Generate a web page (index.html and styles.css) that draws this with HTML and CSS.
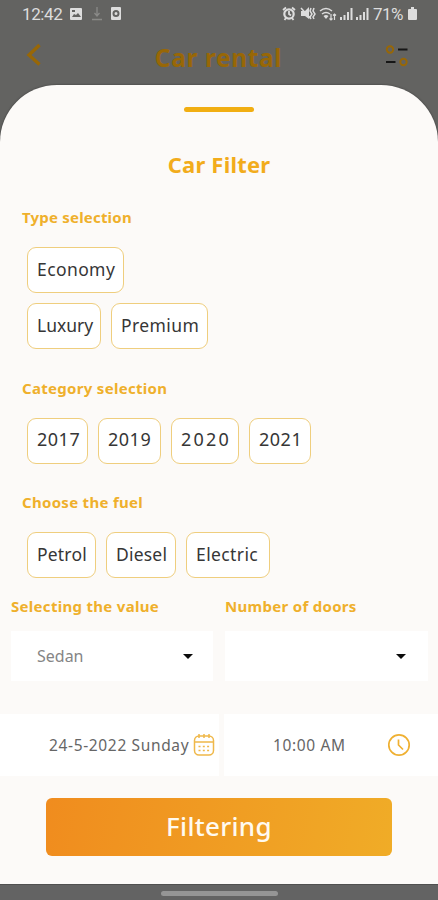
FILE: index.html
```html
<!DOCTYPE html>
<html lang="en">
<head>
<meta charset="utf-8">
<title>Car Filter</title>
<link rel="stylesheet" href="styles.css">
</head>
<body>
<div class="status">
  <span class="time">12:42</span>
  <svg class="left-icons" width="54" height="16" viewBox="0 0 54 16">
    <path fill="#ddd" fill-rule="evenodd" d="M2 2h10q1 0 1 1v10q0 1-1 1H2q-1 0-1-1V3q0-1 1-1zM3 11h9l-3-4-2 2-2-1zM3 4v2h3V4z"/>
    <path stroke="#8a8a88" stroke-width="1.300" fill="none" d="M28 1v9M25.500 7l2.500 3 2.500-3M23 13.500h10"/>
    <path fill="#ddd" fill-rule="evenodd" d="M43 1h8q1 0 1 1v11q0 1-1 1h-8q-1 0-1-1V2q0-1 1-1zM47 4a3.500 3.500 0 1 0 0 7 3.500 3.500 0 1 0 0-7zM47 6a1.500 1.500 0 1 1 0 3 1.500 1.500 0 1 1 0-3z"/>
  </svg>
  <svg class="right-icons" width="90" height="16" viewBox="0 0 90 16" fill="none" stroke="#ddd">
    <circle cx="7" cy="8" r="4.700" stroke-width="2.200"/>
    <path stroke-width="1.800" d="M1 4l3-2.500M13 4l-3-2.500M7 5v3l2 1.500M2.500 14l1.500-2M11.500 14L10 12"/>
    <path fill="#ddd" stroke="none" d="M19 5h4l4-4v12l-4-3h-4z"/>
    <path stroke-width="1.500" d="M19 2l10 11M29 2l-1 3 2 3-2 3 1 2M32 2l-1 3 2 3-2 3 1 2"/>
    <path stroke-width="1.500" d="M38 5q6-5 12 0M40 8q4-3 8 0"/>
    <path fill="#ddd" stroke="none" d="M41.500 10q2.500-2 5 0L44 13z"/>
    <path stroke-width="1.200" d="M49 8v6M47.500 12.500L49 14l1.500-1.500M52.500 14V8M51 9.500L52.500 8 54 9.500"/>
    <path stroke-width="2" d="M59 14v-3M62.500 14V9M66 14V6M69.500 14V2M75 14v-3M78.500 14V9M82 14V6M85.500 14V2"/>
  </svg>
  <span class="percent">71%</span>
  <svg class="battery" width="9" height="14" viewBox="0 0 9 14"><path fill="#ddd" d="M3 0h3v2h2q1 0 1 1v9q0 1-1 1H1q-1 0-1-1V3q0-1 1-1h2z"/></svg>
</div>
<div class="appbar">
  <svg class="back" width="16" height="24" viewBox="0 0 16 24"><path d="M14.500 2L4 12l10.500 9.500" fill="none" stroke="#986706" stroke-width="3.400"/></svg>
  <h1>Car rental</h1>
  <svg class="tune" width="24" height="24" viewBox="0 0 24 24" fill="none" stroke-width="1.900"><circle cx="5" cy="5.500" r="3.200" stroke="#986706"/><circle cx="18.500" cy="18" r="3.200" stroke="#986706"/><path stroke="#161616" stroke-width="2" d="M13 5.500h9.500M1 18h9.500"/></svg>
</div>
<main class="sheet">
  <div class="handle"></div>
  <h2>Car Filter</h2>
  <section class="group type">
    <h3>Type selection</h3>
    <div class="chips">
      <span class="chip economy">Economy</span>
    </div>
    <div class="chips more">
      <span class="chip luxury">Luxury</span>
      <span class="chip premium">Premium</span>
    </div>
  </section>
  <section class="group category">
    <h3>Category selection</h3>
    <div class="chips years">
      <span class="chip y17">2017</span><span class="chip y19">2019</span><span class="chip y20">2020</span><span class="chip y21">2021</span>
    </div>
  </section>
  <section class="group fuel">
    <h3>Choose the fuel</h3>
    <div class="chips">
      <span class="chip petrol">Petrol</span><span class="chip diesel">Diesel</span><span class="chip electric">Electric</span>
    </div>
  </section>
  <div class="selects">
    <div class="field">
      <h3>Selecting the value</h3>
      <div class="select"><span>Sedan</span><i class="caret"></i></div>
    </div>
    <div class="field">
      <h3 class="doors">Number of doors</h3>
      <div class="select"><span></span><i class="caret"></i></div>
    </div>
  </div>
  <div class="schedule">
    <div class="date"><span>24-5-2022 Sunday</span>
      <svg width="22" height="24" viewBox="0 0 22 24" fill="none" stroke="#efb84a" stroke-width="1.500"><rect x="1.500" y="3" width="19" height="19" rx="4.500"/><path d="M2 9h18M6 1v4M11 1v4M16 1v4"/><path stroke-width="1.500" stroke-dasharray="2 2.300" d="M5.500 13.500h12M5.500 17.500h12"/></svg>
    </div>
    <div class="hour"><span>10:00 AM</span>
      <svg width="24" height="24" viewBox="0 0 24 24" fill="none" stroke="#efb032" stroke-width="1.700"><circle cx="12" cy="12" r="10.200"/><path d="M11.500 6.500v5.500l4.500 4.500"/></svg>
    </div>
  </div>
  <button class="submit">Filtering</button>
</main>
<div class="navbar"><i></i></div>
</body>
</html>
```
FILE: styles.css
```css
* { box-sizing: border-box; }
body {
  margin: 0;
  width: 438px;
  height: 900px;
  overflow: hidden;
  display: flex;
  flex-direction: column;
  background: #636361;
  font-family: "Noto Sans", sans-serif;
}
svg { display: block; flex: none; }
h1, h2, h3 { margin: 0; font-weight: 700; white-space: nowrap; }
.status {
  height: 28px;
  padding: 0 21px 0 22px;
  display: flex;
  align-items: center;
  color: #ddd;
  font: 17px/28px Roboto, sans-serif;
}
.time { width: 47px; letter-spacing: -0.4px; }
.right-icons { margin-left: auto; }
.percent { width: 33px; margin-left: 1px; letter-spacing: -0.5px; }
.battery { margin-left: 2px; }
.appbar {
  height: 57px;
  padding: 0 29px 0 25px;
  display: flex;
  justify-content: space-between;
  align-items: center;
  color: #986706;
}
.back { margin-bottom: 4px; }
.tune { margin-bottom: 2px; }
.appbar h1 { font-size: 24.500px; line-height: 32px; letter-spacing: 0.6px; margin-top: 3px; margin-left: 11px; }
.sheet {
  height: 799px;
  background: #fcfaf8;
  border-radius: 57px 57px 0 0;
  box-shadow: 0 0 2px #333;
  display: flex;
  flex-direction: column;
}
.handle {
  width: 70px;
  height: 5px;
  margin: 22px auto 0;
  border-radius: 3px;
  background: #f1ae12;
}
h2 { margin-top: 37px; text-align: center; font-size: 22px; line-height: 30px; letter-spacing: 0.2px; color: #f2ac1c; }
h3 { font-size: 15px; line-height: 20px; letter-spacing: 0.3px; color: #efb02c; }
.group { padding: 0 22px; margin-top: 29px; }
.type { margin-top: 28px; }
.type h3 { letter-spacing: 0.2px; }
.chips { display: flex; gap: 10px; padding-left: 5px; margin-top: 20px; }
.chips.more { margin-top: 10px; }
.chip {
  height: 46px;
  border: 1.500px solid #efce7e;
  border-radius: 9px;
  background: #fff;
  color: #363636;
  padding-left: 9px;
  white-space: nowrap;
  font-size: 17.500px;
  line-height: 43px;
  letter-spacing: 0.4px;
}
.economy { width: 97px; }
.luxury { width: 74px; }
.chip.luxury { letter-spacing: 0; }
.premium { width: 97px; }
.years .chip { font-size: 18px; line-height: 41px; letter-spacing: 0.5px; }
.y17 { width: 61px; }
.y19 { width: 63px; }
.y20 { width: 68px; }
.years .y20 { letter-spacing: 2.200px; }
.y21 { width: 62px; }
.fuel { margin-top: 28px; }
.fuel .chip { line-height: 42px; }
.petrol { width: 69px; }
.chip.petrol, .chip.diesel { letter-spacing: 0.2px; }
.diesel { width: 70px; }
.electric { width: 84px; }
.selects { display: flex; gap: 12px; padding: 0 10px 0 11px; margin-top: 18px; }
.field { width: 202px; }
.field + .field { width: 203px; }
.field + .field .select { padding-right: 22px; }
.select {
  height: 50px;
  margin-top: 15px;
  padding: 0 20px 0 26px;
  display: flex;
  align-items: center;
  justify-content: space-between;
  background: #fff;
  color: #858585;
  font-size: 16px;
}
.caret { border: 5px solid transparent; border-top: 5px solid #0b0b0b; border-bottom: 0; }
.schedule { display: flex; gap: 5px; margin-top: 33px; }
.date, .hour {
  height: 62px;
  display: flex;
  align-items: center;
  background: #fff;
  color: #666;
  font-size: 15.500px;
  letter-spacing: 0.65px;
  white-space: nowrap;
}
.date { width: 219px; padding-left: 49px; }
.date span { width: 144px; }
.hour { flex: 1; padding-left: 49px; }
.hour span { width: 114px; }
.submit {
  width: 346px;
  height: 58px;
  margin: 22px auto 0;
  padding: 0 0 1px;
  border: 0;
  border-radius: 6px;
  background: linear-gradient(100deg, #f08c1e, #f0ac27);
  color: #fffaf0;
  font: 500 26px/57px "Noto Sans", sans-serif;
  letter-spacing: 0.3px;
}
.navbar { height: 16px; background: #636363; border-top: 1px solid #505050; padding-top: 6px; }
.navbar i { display: block; width: 117px; height: 5px; margin: 0 auto; border-radius: 3px; background: #959595; }
```
